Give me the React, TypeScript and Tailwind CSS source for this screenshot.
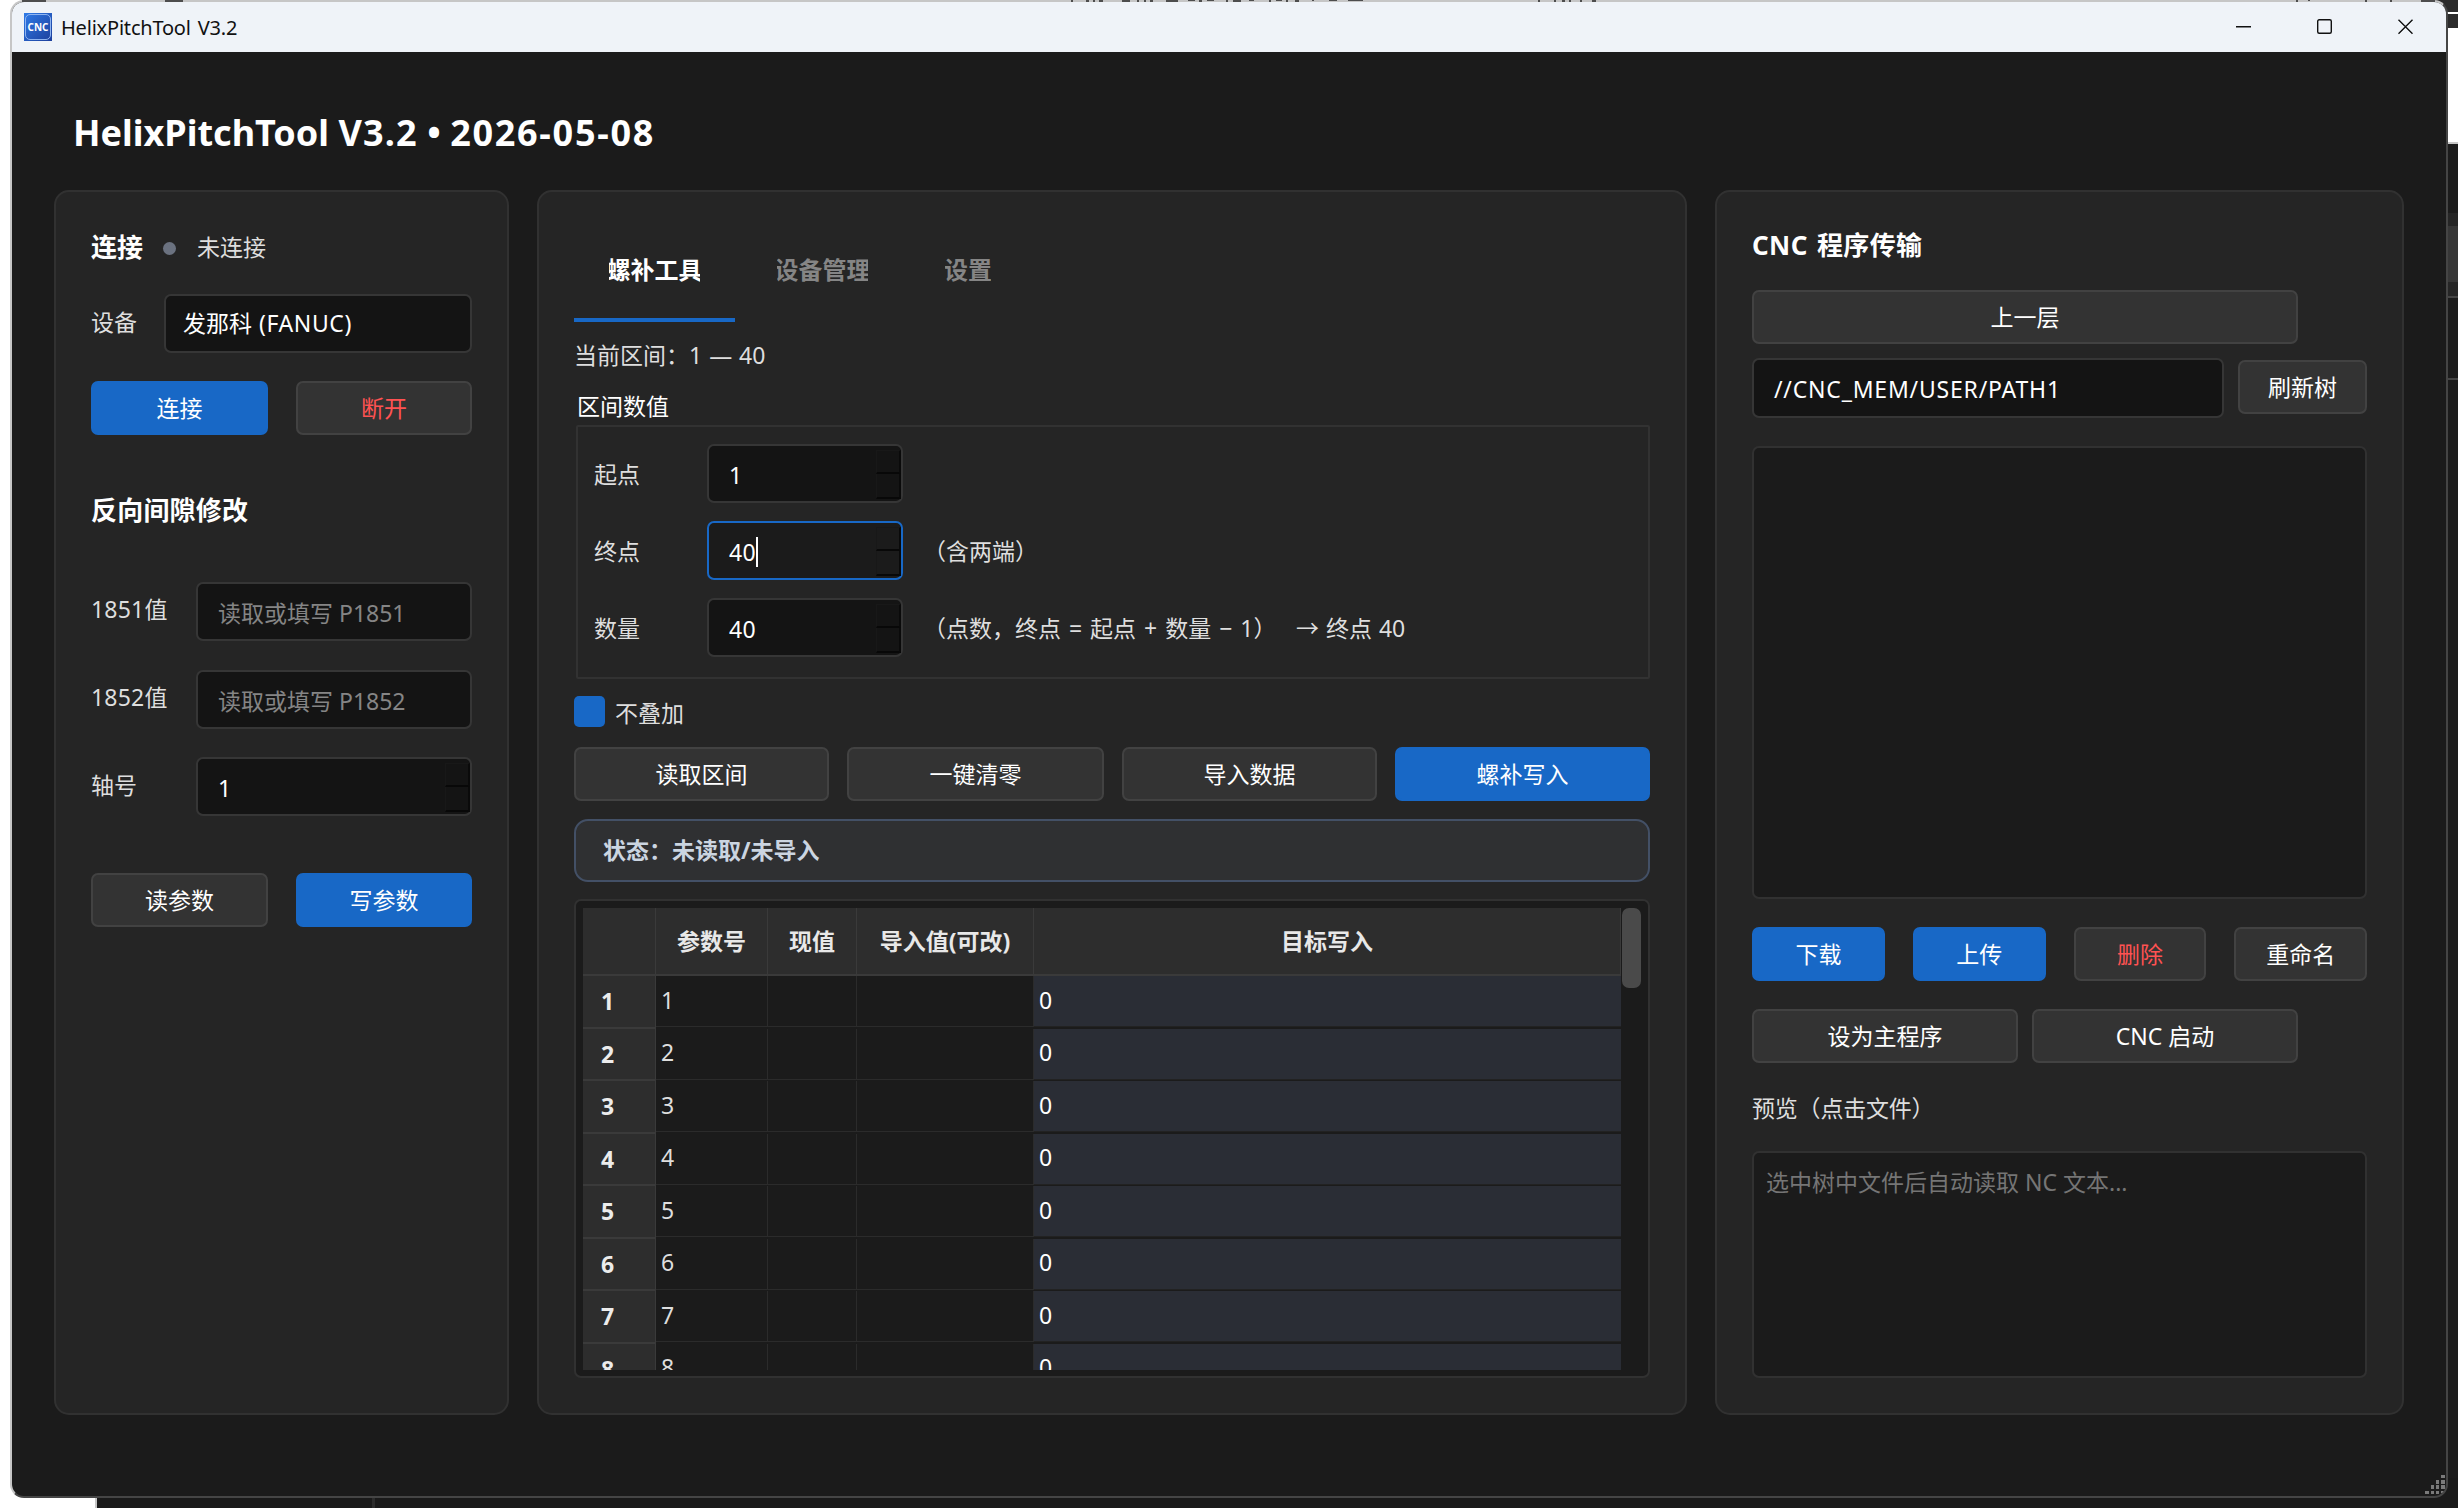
/**
 * @file HelixPitchTool 主窗口。
 * 左侧为连接与反向间隙，中间为螺补工具，右侧为 CNC 程序传输。
 */
import React from "react";
import clsx from "clsx";

type ButtonProps = {
  children: React.ReactNode;
  variant?: "default" | "primary" | "danger";
  className?: string;
};

/** 通用按钮 */
const Button: React.FC<ButtonProps> = ({
  children,
  variant = "default",
  className,
}) => (
  <button
    className={clsx(
      "flex h-[54px] items-center justify-center rounded-[7px] border-2 pb-px",
      variant === "primary" && "border-[#1868c6] bg-[#1868c6] text-white",
      variant === "default" && "border-[#424242] bg-[#333333] text-white",
      variant === "danger" && "border-[#424242] bg-[#333333] text-[#ff5252]",
      className
    )}
  >
    {children}
  </button>
);

/** 数字输入框，右侧带上下微调按钮 */
const SpinBox: React.FC<{
  value: number;
  focused?: boolean;
  className?: string;
}> = ({ value, focused, className }) => (
  <div
    className={clsx(
      "flex h-[59px] justify-between rounded-[7px] border-2 pl-[20px] text-white",
      focused ? "border-[#1868c6] bg-[#1b1b1b]" : "border-[#363636] bg-[#141414]",
      className
    )}
  >
    <div className="flex items-center pt-[2px] tracking-[0.3px]">
      {value}
      {focused && <span className="h-[30px] w-[2px] bg-white" />}
    </div>
    <div className="mt-[4px] flex h-[49px] w-[25px] flex-col">
      <div className="h-[24px] border-t border-r-2 border-b-2 border-l border-t-[#181818] border-r-[#0a0a0a] border-b-[#080808] border-l-[#181818]" />
      <div className="h-[25px] border-r-2 border-b-2 border-l border-r-[#0a0a0a] border-b-[#080808] border-l-[#181818]" />
    </div>
  </div>
);

const Panel: React.FC<{ children: React.ReactNode; className?: string }> = ({
  children,
  className,
}) => (
  <section
    className={clsx(
      "flex h-[1225px] flex-col rounded-[15px] border-2 border-[#313131] bg-[#252525] px-[35px]",
      className
    )}
  >
    {children}
  </section>
);

const TitleBar: React.FC = () => (
  <header className="flex h-[50px] items-center justify-between bg-[#eff3f8] pl-[12px] text-[#111111]">
    <div className="flex items-center gap-[9px]">
      <div className="flex h-[28px] w-[28px] items-center justify-center bg-linear-to-br from-[#2f7be8] to-[#1d3f9c] p-px">
        <div className="flex h-full w-full items-center justify-center rounded-[5px] border border-[#8fb4f0] text-[10px] leading-none font-bold text-white">
          CNC
        </div>
      </div>
      <span className="pt-[2px] text-[20px] tracking-[-0.2px]">
        HelixPitchTool V3.2
      </span>
    </div>
    <svg
      width="212"
      height="16"
      viewBox="0 0 212 16"
      fill="none"
      stroke="#111111"
      strokeWidth="1.4"
    >
      <path d="M2 7.8h15" />
      <rect x="83.7" y="0.7" width="13.6" height="13.6" rx="1.5" />
      <path d="M164.5 0.7l14 14M178.5 0.7l-14 14" />
    </svg>
  </header>
);

const ConnectionPanel: React.FC = () => (
  <Panel className="w-[455px] pt-[39px]">
    <div className="flex h-[32px] items-center">
      <h2 className="text-[26px] font-bold text-white">连接</h2>
      <span className="mt-[3px] ml-[20px] h-[13px] w-[13px] rounded-full bg-[#6b7280]" />
      <span className="ml-[21px]">未连接</span>
    </div>
    <div className="mt-[31px] flex items-center justify-between">
      <span className="pb-[3px]">设备</span>
      <div className="flex h-[59px] w-[308px] items-center rounded-[7px] border-2 border-[#363636] bg-[#141414] pb-[2px] pl-[17px] text-white">
        发那科 <span className="ml-[7px] tracking-[0.6px]">(FANUC)</span>
      </div>
    </div>
    <div className="mt-[28px] flex justify-between">
      <Button variant="primary" className="w-[177px]">
        连接
      </Button>
      <Button variant="danger" className="w-[176px]">
        断开
      </Button>
    </div>

    {/* 反向间隙 */}
    <h2 className="mt-[59px] flex h-[32px] items-center text-[26px] font-bold tracking-[0.2px] text-white">
      反向间隙修改
    </h2>
    <div className="mt-[56px] flex items-center justify-between">
      <span className="pb-[6px] tracking-[0.2px]">1851值</span>
      <div className="flex h-[59px] w-[276px] items-center rounded-[7px] border-2 border-[#363636] bg-[#141414] pt-[2px] pl-[20px] text-[#858585] [word-spacing:0px]">
        读取或填写 P1851
      </div>
    </div>
    <div className="mt-[29px] flex items-center justify-between">
      <span className="pb-[6px] tracking-[0.2px]">1852值</span>
      <div className="flex h-[59px] w-[276px] items-center rounded-[7px] border-2 border-[#363636] bg-[#141414] pt-[2px] pl-[20px] text-[#858585] [word-spacing:0px]">
        读取或填写 P1852
      </div>
    </div>
    <div className="mt-[28px] flex items-center justify-between">
      <span className="pb-[4px]">轴号</span>
      <SpinBox value={1} className="w-[276px]" />
    </div>
    <div className="mt-[57px] flex justify-between">
      <Button className="w-[177px]">读参数</Button>
      <Button variant="primary" className="w-[176px]">
        写参数
      </Button>
    </div>
  </Panel>
);

const rows = [1, 2, 3, 4, 5, 6, 7, 8];

/** 螺补参数表 */
const PitchTable: React.FC = () => (
  <div className="mt-[17px] flex h-[479px] rounded-[7px] border-2 border-[#313131] bg-[#1b1b1b] p-[7px] pb-[6px]">
    <div className="w-[1038px] overflow-hidden">
      <div className="grid h-[68px] grid-cols-[73px_112px_89px_177px_587px] bg-[#2d2d2d] font-bold text-[#e8e8e8]">
        {["", "参数号", "现值", "导入值(可改)", "目标写入"].map((name) => (
          <div
            key={name}
            className="flex items-center justify-center border-r border-b-2 border-[#3a3a3a]"
          >
            {name}
          </div>
        ))}
      </div>
      {rows.map((n) => (
        <div
          key={n}
          className={clsx(
            "grid grid-cols-[73px_112px_89px_177px_587px]",
            n % 2 ? "h-[53px]" : "h-[52px]"
          )}
        >
          <div className="flex items-center border-r border-b-2 border-[#3a3a3a] bg-[#2d2d2d] pb-px pl-[18px] font-bold text-[#ececec]">
            {n}
          </div>
          <div
            className={clsx(
              "col-span-4 grid grid-cols-[112px_89px_177px_587px]",
              n % 2 ? "pb-[2px]" : "pb-px"
            )}
          >
            <div
              className={clsx(
                "flex items-center border-r border-b border-[#2b2b2b] pl-[5px]",
                n % 2 ? "pb-[3px]" : "pb-[5px]"
              )}
            >
              {n}
            </div>
            <div className="border-r border-b border-[#2b2b2b]" />
            <div className="border-r border-b border-[#2b2b2b]" />
            <div
              className={clsx(
                "flex items-center border-b border-[#222222] bg-[#2a2d35] pl-[5px] text-white",
                n % 2 ? "pb-[3px]" : "pb-[5px]"
              )}
            >
              0
            </div>
          </div>
        </div>
      ))}
    </div>
    <div className="ml-px h-[80px] w-[19px] rounded-[7px] bg-[#4a4a4a]" />
  </div>
);

const PitchPanel: React.FC = () => (
  <Panel className="ml-[28px] w-[1150px] pt-[30px]">
    {/* 标签页 */}
    <div className="flex h-[100px] gap-[7px] text-[24px] font-bold text-[#858585]">
      <div className="flex w-[161px] items-center border-b-4 border-[#1868c6] px-[35px] text-white">
        <div className="flex w-full justify-center overflow-hidden whitespace-nowrap">
          螺补工具
        </div>
      </div>
      <div className="flex w-[161px] items-center border-b-4 border-transparent px-[35px]">
        <div className="flex w-full justify-center overflow-hidden whitespace-nowrap">
          设备管理
        </div>
      </div>
      <div className="flex w-[116px] items-center border-b-4 border-transparent px-[35px]">
        <div className="flex w-full justify-center overflow-hidden whitespace-nowrap">
          设置
        </div>
      </div>
    </div>

    <div className="mt-[17px] flex h-[32px] items-center [word-spacing:1px]">
      当前区间：1 — 40
    </div>
    <div className="mt-[19px] flex h-[32px] items-center pl-[3px] text-white">
      区间数值
    </div>
    <div className="mt-[3px] ml-[2px] flex h-[254px] flex-col gap-[18px] rounded-[2px] border-2 border-[#323232] pt-[17px] pl-[16px]">
      <div className="flex items-center">
        <span className="w-[113px]">起点</span>
        <SpinBox value={1} className="w-[196px]" />
      </div>
      <div className="flex items-center">
        <span className="w-[113px]">终点</span>
        <SpinBox value={40} focused className="w-[196px]" />
        <span className="ml-[20px]">（含两端）</span>
      </div>
      <div className="flex items-center">
        <span className="w-[113px]">数量</span>
        <SpinBox value={40} className="w-[196px]" />
        <span className="ml-[20px] w-[373px] whitespace-nowrap">
          （点数，终点 = 起点 + 数量 − 1）
        </span>
        <span className="[word-spacing:1px]">→ 终点 40</span>
      </div>
    </div>

    <label className="mt-[17px] flex h-[31px] items-center gap-[10px]">
      <span className="h-[31px] w-[31px] rounded-[5px] bg-[#1868c6]" />
      <span className="pt-[3px]">不叠加</span>
    </label>
    <div className="mt-[20px] grid grid-cols-[255px_257px_255px_255px] gap-[18px]">
      <Button>读取区间</Button>
      <Button>一键清零</Button>
      <Button>导入数据</Button>
      <Button variant="primary">螺补写入</Button>
    </div>
    <div className="mt-[18px] flex h-[63px] items-center rounded-[14px] border-2 border-[#435066] bg-[#2f3032] pb-px pl-[27px] font-bold text-[#cbd5e1]">
      状态：未读取/未导入
    </div>
    <PitchTable />
  </Panel>
);

const TransferPanel: React.FC = () => (
  <Panel className="ml-[28px] w-[689px] pt-[37px]">
    <h2 className="flex h-[32px] items-center text-[26px] font-bold tracking-[0.4px] text-white">
      CNC 程序传输
    </h2>
    <Button className="mt-[29px] w-[546px]">上一层</Button>
    <div className="mt-[14px] flex h-[60px] justify-between">
      <div className="flex w-[472px] items-center rounded-[7px] border-2 border-[#363636] bg-[#141414] pt-px pl-[20px] tracking-[0.8px] text-white">
        //CNC_MEM/USER/PATH1
      </div>
      <Button className="mt-[2px] w-[129px]">刷新树</Button>
    </div>

    {/* 程序树 */}
    <div className="mt-[28px] h-[453px] rounded-[7px] border-2 border-[#313131] bg-[#1b1b1b]" />

    <div className="mt-[28px] grid grid-cols-4 gap-[28px]">
      <Button variant="primary">下载</Button>
      <Button variant="primary">上传</Button>
      <Button variant="danger">删除</Button>
      <Button>重命名</Button>
    </div>
    <div className="mt-[28px] flex gap-[14px]">
      <Button className="w-[266px]">设为主程序</Button>
      <Button className="w-[266px]">CNC 启动</Button>
    </div>

    {/* 预览 */}
    <div className="mt-[29px] flex h-[32px] items-center tracking-[-0.2px]">
      预览（点击文件）
    </div>
    <div className="mt-[27px] h-[227px] rounded-[7px] border-2 border-[#313131] bg-[#1b1b1b] pt-[13px] pl-[12px] text-[#757575] [word-spacing:0px]">
      选中树中文件后自动读取 NC 文本...
    </div>
  </Panel>
);

/** 窗口右下角的缩放手柄 */
const SizeGrip: React.FC = () => (
  <svg
    className="absolute right-px bottom-[2px]"
    width="20"
    height="19"
    fill="#7a7a7a"
  >
    <path d="M16 0h4v3h-4zM11 5h3v4h-3zM16 5h4v4h-4zM6 10h3v4H6zM11 10h3v4h-3zM16 10h4v4h-4zM0 16h4v3H0zM6 16h3v3H6zM11 16h3v3h-3zM16 16h3v2h-3z" />
  </svg>
);

/** 窗口上沿透出的后方窗口痕迹 */
const TopEdge: React.FC = () => (
  <svg
    className="absolute top-0 left-0"
    width="2458"
    height="2"
    fill="#4d4d4d"
  >
    <path d="M22 0h24v2H22zM165 0h18v2h-18zM1071 0h2v2h-2zM1086 0h3v2h-3zM1093 0h2v2h-2zM1099 0h4v2h-4zM1122 0h8v2h-8zM1137 0h2v2h-2zM1144 0h2v2h-2zM1150 0h3v2h-3zM1166 0h12v2h-12zM1188 0h7v1h-7zM1199 0h3v2h-3zM1207 0h7v1h-7zM1226 0h2v2h-2zM1233 0h8v2h-8zM1249 0h5v1h-5zM1269 0h2v2h-2zM1276 0h6v1h-6zM1286 0h2v2h-2zM1295 0h4v2h-4zM1312 0h2v1h-2zM1329 0h8v1h-8zM1348 0h15v1h-15zM1538 0h2v2h-2zM1554 0h2v2h-2zM1562 0h3v2h-3zM1569 0h2v2h-2zM1580 0h2v2h-2zM1592 0h4v2h-4zM2296 0h2v2h-2zM2308 0h2v1h-2zM2365 0h2v2h-2zM2390 0h2v2h-2zM2421 0h14v2h-14z" />
  </svg>
);

/** 窗口后方露出的桌面内容 */
const Backdrop: React.FC = () => (
  <div className="flex h-full flex-col bg-white">
    <div className="flex flex-1 justify-end">
      <div className="flex w-[30px] flex-col bg-[#1c1c1c]">
        <div className="h-[12px] bg-[#2b2b2b]" />
        <div className="h-[2px] bg-white" />
        <div className="h-[14px] bg-[#2b2b2b]" />
        <div className="h-[114px] bg-white" />
        <div className="h-[2px] bg-[#c6c6c6]" />
        <div className="h-[69px]" />
        <div className="h-[13px] bg-[#262626]" />
        <div className="h-[56px] bg-[#373737]" />
        <div className="h-[14px] bg-[#262626]" />
        <div className="h-[2px] bg-[#454545]" />
        <div className="h-[80px]" />
        <div className="h-[2px] bg-[#454545]" />
      </div>
    </div>
    <div className="ml-[95px] flex h-[30px] border-l-2 border-[#c6c6c6] bg-[#1a1a1a]">
      <div className="ml-[275px] w-[3px] bg-[#2c2c2c]" />
    </div>
  </div>
);

const App: React.FC = () => {
  return (
    <div className="relative h-[1508px] w-[2458px] overflow-hidden font-['Noto_Sans','Noto_Sans_CJK_SC',sans-serif] text-[23px] leading-[32px] [word-spacing:2px] text-[#dedede]">
      <Backdrop />
      <div className="absolute top-0 left-[10px] flex h-[1498px] w-[2438px] flex-col overflow-hidden rounded-[14px] border-2 border-t-[#c6c6c6] border-r-[#454545] border-b-[#454545] border-l-[#c6c6c6] bg-[#1b1b1b]">
        <TitleBar />
        <h1 className="mt-[57px] ml-[61px] h-[48px] text-[36px] leading-[48px] font-bold whitespace-nowrap text-white [word-spacing:0px]">
          HelixPitchTool <span className="tracking-[1.2px]">V3.2</span> •{" "}
          <span className="tracking-[1.7px]">2026-05-08</span>
        </h1>
        <main className="mt-[33px] ml-[42px] flex">
          <ConnectionPanel />
          <PitchPanel />
          <TransferPanel />
        </main>
        <SizeGrip />
      </div>
      <TopEdge />
    </div>
  );
};

export default App;
